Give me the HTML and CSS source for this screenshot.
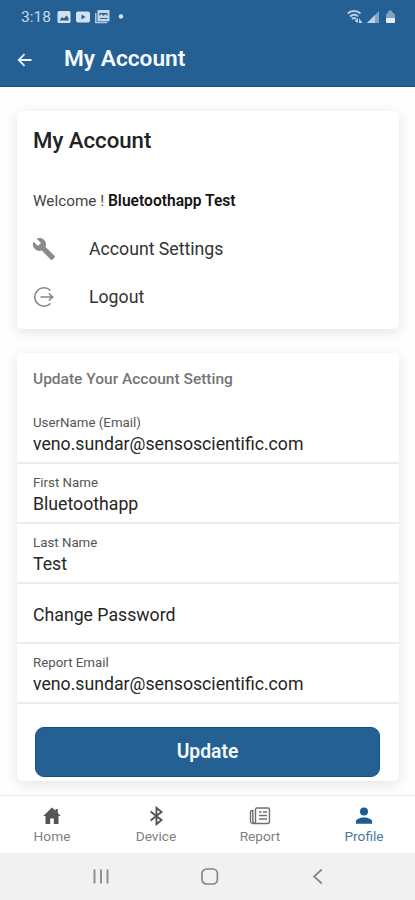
FILE: index.html
```html
<!DOCTYPE html>
<html lang="en">
<head>
<meta charset="utf-8">
<title>My Account</title>
<link rel="stylesheet" href="styles.css">
</head>
<body>
<header class="header">
  <div class="status">
    <span class="time">3:18</span>
    <svg class="notif" width="68" height="14" viewBox="0 0 68 14">
      <path fill="#d3e1ef" fill-rule="evenodd" d="M2 1h10a1.500 1.500 0 0 1 1.500 1.500v9a1.500 1.500 0 0 1-1.500 1.500H2a1.500 1.500 0 0 1-1.500-1.500v-9A1.500 1.500 0 0 1 2 1zM2.500 10.500h9V8L9.500 5.500 7 8.500 5 7z"/>
      <path fill="#d3e1ef" fill-rule="evenodd" d="M21 1.500h10a2 2 0 0 1 2 2v7a2 2 0 0 1-2 2H21a2 2 0 0 1-2-2v-7a2 2 0 0 1 2-2zM24.500 4.500v5l4-2.500z"/>
      <path fill="none" stroke="#b5cce2" stroke-width="1.500" d="M38.800 3v9.500h11.500"/>
      <path fill="#c4d7e9" fill-rule="evenodd" d="M40.500 0H52.500v11.200H40.500zM42.500 3v3l2-2 2 2 2-2 2 2V3zM43 8v1h7.500V8z"/>
      <circle cx="64" cy="6.500" r="2.300" fill="#d3e1ef"/>
    </svg>
    <svg class="signals" width="50" height="15" viewBox="0 0 50 15">
      <path fill="none" stroke="#b9cfe2" stroke-width="2" d="M.8 4.500C4 1 10 1 13.500 4.500M3 7.500c2.500-2.500 6-2.500 8 0M5 10c1.500-1.500 3-1.500 4 0"/>
      <path fill="#b9cfe2" d="M7.500 12l3.500-3v5zM12 14V9l3.500 5z"/>
      <path fill="#7fa5c7" d="M32 2v12H20z"/>
      <path fill="#b9cfe2" d="M28 6v8h-8z"/>
      <path fill="#7fa2c3" d="M39 9V6q0-1.500 2-2.500l1-2h2.500l1 2q2.500 1 2.500 2.500v3z"/>
      <path fill="#e5edf5" d="M39 9h9v4q0 1-1 1h-7q-1 0-1-1z"/>
    </svg>
  </div>
  <div class="toolbar">
    <svg class="back" width="16" height="14" viewBox="0 0 16 14"><path fill="none" stroke="#eef5fb" stroke-width="1.800" d="M14.500 7H2M7.500 1.200L1.700 7l5.800 5.800"/></svg>
    <h1 class="title">My Account</h1>
  </div>
</header>

<main class="content">
  <section class="card account">
    <h2 class="card-title">My Account</h2>
    <p class="welcome">Welcome ! <b>Bluetoothapp Test</b></p>
    <div class="link">
      <svg width="24" height="24" viewBox="0 0 24 24"><path fill="#8a8a8a" d="M22.700 19l-9.100-9.100c.9-2.300.4-5-1.500-6.900-2-2-5-2.400-7.400-1.300L9 6 6 9 1.600 4.700C.4 7.100.9 10.100 2.900 12.100c1.900 1.900 4.600 2.400 6.900 1.500l9.100 9.100c.4.4 1 .4 1.400 0l2.300-2.300c.5-.4.5-1.100.1-1.400z"/></svg>
      <span>Account Settings</span>
    </div>
    <div class="link">
      <svg width="24" height="24" viewBox="0 0 24 24"><path fill="none" stroke="#858585" stroke-width="1.600" d="M18.500 5.500A9.200 9.200 0 1 0 18.500 18.500M8.500 12H20.500M16.800 8.500l3.800 3.500-3.800 3.500"/></svg>
      <span>Logout</span>
    </div>
  </section>

  <section class="card settings">
    <h3 class="subtitle">Update Your Account Setting</h3>
    <div class="field"><span class="label">UserName (Email)</span><span class="value">veno.sundar@sensoscientific.com</span></div>
    <div class="field"><span class="label">First Name</span><span class="value">Bluetoothapp</span></div>
    <div class="field"><span class="label">Last Name</span><span class="value">Test</span></div>
    <div class="field single"><span class="value change">Change Password</span></div>
    <div class="field"><span class="label">Report Email</span><span class="value">veno.sundar@sensoscientific.com</span></div>
    <button class="update">Update</button>
  </section>
</main>

<nav class="tabs">
  <div class="tab">
    <svg width="22" height="20" viewBox="0 0 22 20"><path fill="#555" d="M11 1.500l3.500 3.300V3h2.300v4l3 2.900h-2.300v8h-4.700v-5.500H9.200v5.500H4.500v-8H2.200z"/></svg>
    <span>Home</span>
  </div>
  <div class="tab">
    <svg width="22" height="20" viewBox="0 0 22 20"><path fill="none" stroke="#555" stroke-width="1.900" d="M5.500 5.500l11 8.500-5 4.200V1.800l5 4.200-11 8.500"/></svg>
    <span>Device</span>
  </div>
  <div class="tab">
    <svg width="22" height="20" viewBox="0 0 22 20"><path fill="none" stroke="#707070" stroke-width="1.400" d="M6.500 15.500V3.500q0-1.500 1.500-1.500h11q1.500 0 1.500 1.500v12q0 2-2 2H4q-2.500 0-2.500-2.500V6q0-1.500 1.500-1.500h.8v9.500q0 3 1.400 3t1.300-1.500M10 6h2.500M14 6h4M10 9.500h8M10 13h8"/></svg>
    <span>Report</span>
  </div>
  <div class="tab active">
    <svg width="22" height="20" viewBox="0 0 22 20"><circle cx="11" cy="5.600" r="4" fill="#1d5b91"/><path fill="#1d5b91" d="M2.800 17.800v-2c0-2.500 4-4.300 8.200-4.300s8.200 1.800 8.200 4.300v2z"/></svg>
    <span>Profile</span>
  </div>
</nav>

<footer class="system">
  <svg width="18" height="18" viewBox="0 0 18 18"><path fill="none" stroke="#8b8b8b" stroke-width="1.900" d="M2.500 1.500v14M9 1.500v14M15.500 1.500v14"/></svg>
  <svg width="18" height="18" viewBox="0 0 18 18"><rect x="1" y="1" width="15.400" height="15" rx="4.500" fill="none" stroke="#858585" stroke-width="1.700"/></svg>
  <svg width="18" height="18" viewBox="0 0 18 18"><path fill="none" stroke="#858585" stroke-width="1.700" d="M12.800 1.500L5 8.500l7.800 7"/></svg>
</footer>
</body>
</html>
```
FILE: styles.css
```css
* {
  box-sizing: border-box;
}

body {
  margin: 0;
  width: 415px;
  height: 900px;
  overflow: hidden;
  display: flex;
  flex-direction: column;
  background: #fefefe;
  color: #222;
  font-family: Roboto, "Liberation Sans", sans-serif;
}

h1, h2, h3, p {
  margin: 0;
}

svg {
  display: block;
  flex: none;
}

.header {
  height: 87px;
  background: #246093;
  border-bottom: 1px solid #165083;
  flex: none;
}

.status {
  height: 33px;
  padding: 0 18px 0 21px;
  display: flex;
  align-items: center;
  color: #c7d9ea;
}

.time {
  width: 36px;
  font-size: 15.500px;
}

.signals {
  margin-left: auto;
}

.toolbar {
  height: 53px;
  padding-left: 17px;
  display: flex;
  align-items: center;
}

.title {
  margin: -1px 0 0 31px;
  font-size: 22.700px;
  font-weight: 600;
  line-height: 26px;
  color: #f4fafe;
}

.content {
  flex: 1;
  padding: 24px 16px 0 17px;
  display: flex;
  flex-direction: column;
  gap: 24px;
  min-height: 0;
}

.card {
  flex: none;
  background: #fff;
  border-radius: 6px;
  box-shadow: 0 3px 14px rgba(0, 0, 0, 0.11);
}

.account {
  height: 218px;
  padding: 15px 16px 0;
}

.card-title {
  font-size: 22.200px;
  font-weight: 500;
  line-height: 29px;
}

.welcome {
  margin: 36px 0 14px;
  font-size: 15.300px;
  line-height: 20px;
  color: #444;
}

.welcome b {
  font-size: 15.600px;
  font-weight: 600;
  color: #151515;
}

.link {
  height: 48px;
  display: flex;
  align-items: center;
  gap: 32px;
  font-size: 17.700px;
  color: #333;
}

.link svg {
  margin: -1px 0 0 -1px;
}

.link span {
  margin-left: 1px;
}

.settings {
  height: 428px;
}

.subtitle {
  height: 51px;
  padding: 16px 16px 0;
  font-size: 15.500px;
  font-weight: 500;
  line-height: 21px;
  color: #757575;
}

.field {
  height: 60px;
  padding: 10px 16px 0;
  border-bottom: 2px solid #ececec;
  display: flex;
  flex-direction: column;
}

.label {
  font-size: 13.300px;
  line-height: 18px;
  color: #555;
}

.value {
  font-size: 17.700px;
  line-height: 25px;
  color: #252525;
}

.single {
  padding-top: 19px;
}

.update {
  display: block;
  width: 345px;
  height: 50px;
  margin: 23px 0 0 18px;
  padding: 0 0 2px;
  border: 1px solid #165083;
  border-radius: 9px;
  background: #246093;
  color: #f4fafe;
  font: 600 19.300px Roboto, "Liberation Sans", sans-serif;
}

.tabs {
  height: 58px;
  flex: none;
  display: grid;
  grid-template-columns: repeat(4, 104px);
  background: #fff;
  border-top: 1px solid #e8e8e8;
}

.tab {
  padding-top: 10px;
  display: flex;
  flex-direction: column;
  align-items: center;
  gap: 2px;
  font-size: 13.700px;
  line-height: 17px;
  color: #808080;
}

.active {
  color: #467a9c;
}

.system {
  height: 47px;
  flex: none;
  padding: 0 88px 0 92px;
  display: flex;
  align-items: center;
  justify-content: space-between;
  background: #f1f1f1;
}
```
